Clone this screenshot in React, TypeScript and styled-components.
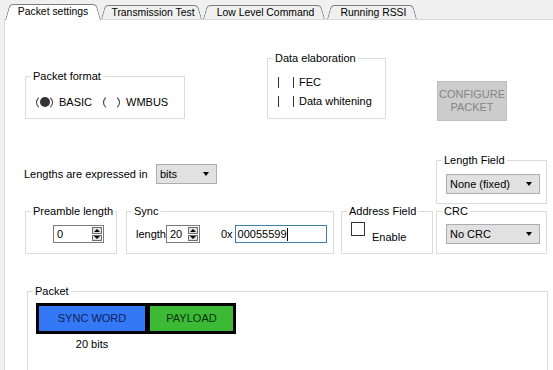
import React from "react";
import styled, { createGlobalStyle } from "styled-components";

const GlobalStyle = createGlobalStyle`
  html, body {
    margin: 0;
    padding: 0;
    background: #f0f0f0;
  }
  body {
    font-family: "Liberation Sans", Arial, sans-serif;
    font-size: 11px;
    color: #000;
  }
  #root {
    width: 553px;
    height: 370px;
    overflow: hidden;
  }
`;

const Window = styled.div`
  width: 553px;
  height: 370px;
  display: flex;
  flex-direction: column;
  background: #f0f0f0;
  overflow: hidden;
`;

const TabStrip = styled.div`
  flex-shrink: 0;
  display: flex;
  align-items: flex-end;
  height: 19px;
  padding-left: 5px;
  position: relative;
  z-index: 1;
`;

const Tab = styled.div<{ $active?: boolean; $w: number; $gap?: number }>`
  position: relative;
  z-index: ${p => (p.$active ? 2 : 1)};
  box-sizing: border-box;
  width: ${p => p.$w}px;
  height: ${p => (p.$active ? 16 : 14)}px;
  margin-bottom: ${p => (p.$active ? -1 : 0)}px;
  margin-left: ${p => p.$gap ?? 0}px;
  padding: ${p => (p.$active ? "0 0 1px 0" : "0 0 0 3px")};
  display: flex;
  align-items: center;
  justify-content: center;
  white-space: nowrap;
  font-size: 10.4px;
  line-height: 13px;

  &::before,
  &::after {
    content: "";
    position: absolute;
    top: 0;
    bottom: 0;
    width: 56%;
    box-sizing: border-box;
    background: ${p => (p.$active ? "#fff" : "#f0f0f0")};
    border-top: 1px solid #7d7d7d;
    z-index: -1;
  }
  &::before {
    left: 0;
    border-left: 1px solid #7d7d7d;
    border-top-left-radius: 4px;
    transform: skewX(-16deg);
    transform-origin: bottom left;
  }
  &::after {
    right: 0;
    border-right: 1px solid #7d7d7d;
    border-top-right-radius: 4px;
    transform: skewX(16deg);
    transform-origin: bottom right;
  }
`;

const Page = styled.div`
  flex: 1;
  min-height: 0;
  overflow: hidden;
  margin-left: 4px;
  background: #fff;
  border-top: 1px solid #d9d9d9;
  border-left: 1px solid #d9d9d9;
  display: flex;
  flex-direction: column;
`;

const Row = styled.div`
  flex-shrink: 0;
  display: flex;
  align-items: flex-start;
`;

const GroupBox = styled.div`
  position: relative;
  box-sizing: border-box;
  flex-shrink: 0;
  border: 1px solid #dcdcdc;
`;

const GroupTitle = styled.span`
  position: absolute;
  top: -7px;
  left: 5px;
  padding: 0 2px;
  background: #fff;
  line-height: 13px;
  white-space: nowrap;
`;

/* packet format */

const FormatGroup = styled(GroupBox)`
  margin: 56px 0 0 20px;
  width: 160px;
  height: 43px;
  padding: 9px 0 0 10px;
  display: flex;
  align-items: center;
`;

const RadioOption = styled.label`
  display: flex;
  align-items: center;
  gap: 6px;
  margin-right: 11px;
  line-height: 13px;
`;

const RadioMark = styled.span<{ $checked?: boolean }>`
  width: 17px;
  height: 15px;
  box-sizing: border-box;
  border-radius: 50%;
  border: 1.5px solid #3a3a3a;
  border-top-color: transparent;
  border-bottom-color: transparent;
  display: flex;
  align-items: center;
  justify-content: center;

  &::after {
    content: "";
    width: 10px;
    height: 10px;
    border-radius: 50%;
    background: ${p => (p.$checked ? "#333" : "transparent")};
  }
`;

/* data elaboration */

const ElabGroup = styled(GroupBox)`
  margin: 38px 0 0 82px;
  width: 119px;
  height: 61px;
  padding: 17px 0 0 10px;
  display: flex;
  flex-direction: column;
  gap: 6px;
`;

const CheckRow = styled.div`
  display: flex;
  align-items: center;
  line-height: 13px;
`;

const CheckBars = styled.span`
  width: 16px;
  height: 11px;
  box-sizing: border-box;
  border-left: 1px solid #333;
  border-right: 1px solid #333;
  margin-right: 5px;
`;

const ConfigureButton = styled.button`
  margin: 61px 0 0 51px;
  width: 70px;
  height: 40px;
  box-sizing: border-box;
  padding: 0;
  background: #cccccc;
  border: 1px solid #bfbfbf;
  color: #858585;
  font: inherit;
  line-height: 13px;
  text-align: center;
`;

/* lengths row */

const LengthsLine = styled.div`
  margin: 43px 0 0 19px;
  display: flex;
  align-items: center;
`;

const LengthsLabel = styled.span`
  width: 132px;
  line-height: 13px;
  white-space: nowrap;
`;

const Combo = styled.div<{ $w: number }>`
  width: ${p => p.$w}px;
  height: 20px;
  box-sizing: border-box;
  background: #e1e1e1;
  border: 1px solid #adadad;
  display: flex;
  align-items: center;
  justify-content: space-between;
  padding: 0 7px 0 3px;
  line-height: 13px;
  white-space: nowrap;
`;

const ComboArrow = styled.span`
  width: 0;
  height: 0;
  border-left: 3.5px solid transparent;
  border-right: 3.5px solid transparent;
  border-top: 4px solid #000;
`;

const LengthFieldGroup = styled(GroupBox)`
  margin: 39px 0 0 219px;
  width: 111px;
  height: 44px;
  padding: 13px 0 0 9px;
`;

/* settings row */

const PreambleGroup = styled(GroupBox)`
  margin: 7px 0 0 20px;
  width: 92px;
  height: 43px;
  padding: 13px 0 0 27px;
`;

const SyncGroup = styled(GroupBox)`
  margin: 7px 0 0 9px;
  width: 208px;
  height: 43px;
  padding: 12px 0 0 9px;
  display: flex;
  align-items: flex-start;
`;

const SyncContent = styled.div`
  display: flex;
  align-items: center;
  height: 20px;
  line-height: 13px;
`;

const HexPrefix = styled.span`
  margin: 0 2px 0 21px;
`;

const HexField = styled.div`
  width: 92px;
  height: 18px;
  box-sizing: border-box;
  border: 1px solid #3c7fb1;
  background: #fff;
  display: flex;
  align-items: center;
  padding-left: 2px;

  &::after {
    content: "";
    width: 1px;
    height: 13px;
    background: #000;
  }
`;

const SpinBox = styled.div<{ $w: number }>`
  width: ${p => p.$w}px;
  height: 18px;
  box-sizing: border-box;
  border: 1px solid #7a7a7a;
  background: #fff;
  display: flex;
  justify-content: space-between;
  align-items: stretch;
`;

const SpinValue = styled.span`
  display: flex;
  align-items: center;
  padding-left: 3px;
  line-height: 13px;
`;

const SpinButtons = styled.div`
  width: 12px;
  display: flex;
  flex-direction: column;
  gap: 1px;
  padding: 1px;
  box-sizing: border-box;
`;

const SpinButton = styled.span<{ $down?: boolean }>`
  flex: 1;
  background: #e1e1e1;
  border: 1px solid #6f6f6f;
  display: flex;
  align-items: center;
  justify-content: center;

  &::after {
    content: "";
    width: 0;
    height: 0;
    border-left: 3px solid transparent;
    border-right: 3px solid transparent;
    ${p => (p.$down ? "border-top: 3px solid #000;" : "border-bottom: 3px solid #000;")}
  }
`;

const AddressGroup = styled(GroupBox)`
  margin: 7px 0 0 7px;
  width: 92px;
  height: 43px;
  padding: 10px 0 0 9px;
  display: flex;
  align-items: flex-start;
`;

const CheckBox = styled.span`
  width: 14px;
  height: 14px;
  box-sizing: border-box;
  border: 1px solid #333;
  background: #fff;
`;

const CheckLabel = styled.span`
  margin: 9px 0 0 7px;
  line-height: 13px;
`;

const CrcGroup = styled(GroupBox)`
  margin: 7px 0 0 3px;
  width: 111px;
  height: 43px;
  padding: 12px 0 0 9px;
`;

/* packet preview */

const PacketGroup = styled(GroupBox)`
  margin: 37px 0 0 22px;
  width: 521px;
  height: 120px;
  padding: 11px 0 0 8px;
  display: flex;
  align-items: flex-start;
`;

const FieldColumn = styled.div`
  display: flex;
  flex-direction: column;
  align-items: center;
`;

const PacketField = styled.div<{ $w: number; $bg: string; $fg: string; $joined?: boolean }>`
  width: ${p => p.$w}px;
  height: 31px;
  box-sizing: border-box;
  border: 3px solid #000;
  border-left-width: ${p => (p.$joined ? 2 : 3)}px;
  background: ${p => p.$bg};
  color: ${p => p.$fg};
  display: flex;
  align-items: center;
  justify-content: center;
  line-height: 13px;
`;

const FieldNote = styled.span`
  margin-top: 4px;
  line-height: 13px;
`;

const Radio: React.FC<{ label: string; checked?: boolean }> = ({ label, checked }) => (
  <RadioOption>
    <RadioMark $checked={checked} />
    {label}
  </RadioOption>
);

const Spin: React.FC<{ value: string; w: number }> = ({ value, w }) => (
  <SpinBox $w={w}>
    <SpinValue>{value}</SpinValue>
    <SpinButtons>
      <SpinButton />
      <SpinButton $down />
    </SpinButtons>
  </SpinBox>
);

const Select: React.FC<{ value: string; w: number }> = ({ value, w }) => (
  <Combo $w={w}>
    {value}
    <ComboArrow />
  </Combo>
);

export default function App() {
  return (
    <>
      <GlobalStyle />
      <Window>
        <TabStrip>
          <Tab $active $w={96}>Packet settings</Tab>
          <Tab $w={101}>Transmission Test</Tab>
          <Tab $w={122} $gap={1}>Low Level Command</Tab>
          <Tab $w={90} $gap={2}>Running RSSI</Tab>
        </TabStrip>
        <Page>
          <Row>
            <FormatGroup>
              <GroupTitle>Packet format</GroupTitle>
              <Radio label="BASIC" checked />
              <Radio label="WMBUS" />
            </FormatGroup>
            <ElabGroup>
              <GroupTitle>Data elaboration</GroupTitle>
              <CheckRow>
                <CheckBars />
                FEC
              </CheckRow>
              <CheckRow>
                <CheckBars />
                Data whitening
              </CheckRow>
            </ElabGroup>
            <ConfigureButton disabled>
              CONFIGURE
              <br />
              PACKET
            </ConfigureButton>
          </Row>

          <Row>
            <LengthsLine>
              <LengthsLabel>Lengths are expressed in</LengthsLabel>
              <Select value="bits" w={61} />
            </LengthsLine>
            <LengthFieldGroup>
              <GroupTitle>Length Field</GroupTitle>
              <Select value="None (fixed)" w={94} />
            </LengthFieldGroup>
          </Row>

          <Row>
            <PreambleGroup>
              <GroupTitle>Preamble length</GroupTitle>
              <Spin value="0" w={51} />
            </PreambleGroup>
            <SyncGroup>
              <GroupTitle>Sync</GroupTitle>
              <SyncContent>
                length
                <Spin value="20" w={34} />
                <HexPrefix>0x</HexPrefix>
                <HexField>00055599</HexField>
              </SyncContent>
            </SyncGroup>
            <AddressGroup>
              <GroupTitle>Address Field</GroupTitle>
              <CheckBox />
              <CheckLabel>Enable</CheckLabel>
            </AddressGroup>
            <CrcGroup>
              <GroupTitle>CRC</GroupTitle>
              <Select value="No CRC" w={94} />
            </CrcGroup>
          </Row>

          <Row>
            <PacketGroup>
              <GroupTitle>Packet</GroupTitle>
              <FieldColumn>
                <PacketField $w={112} $bg="#3478f6" $fg="#0e2358">SYNC WORD</PacketField>
                <FieldNote>20 bits</FieldNote>
              </FieldColumn>
              <PacketField $w={88} $bg="#3dba35" $fg="#0a300a" $joined>PAYLOAD</PacketField>
            </PacketGroup>
          </Row>
        </Page>
      </Window>
    </>
  );
}
